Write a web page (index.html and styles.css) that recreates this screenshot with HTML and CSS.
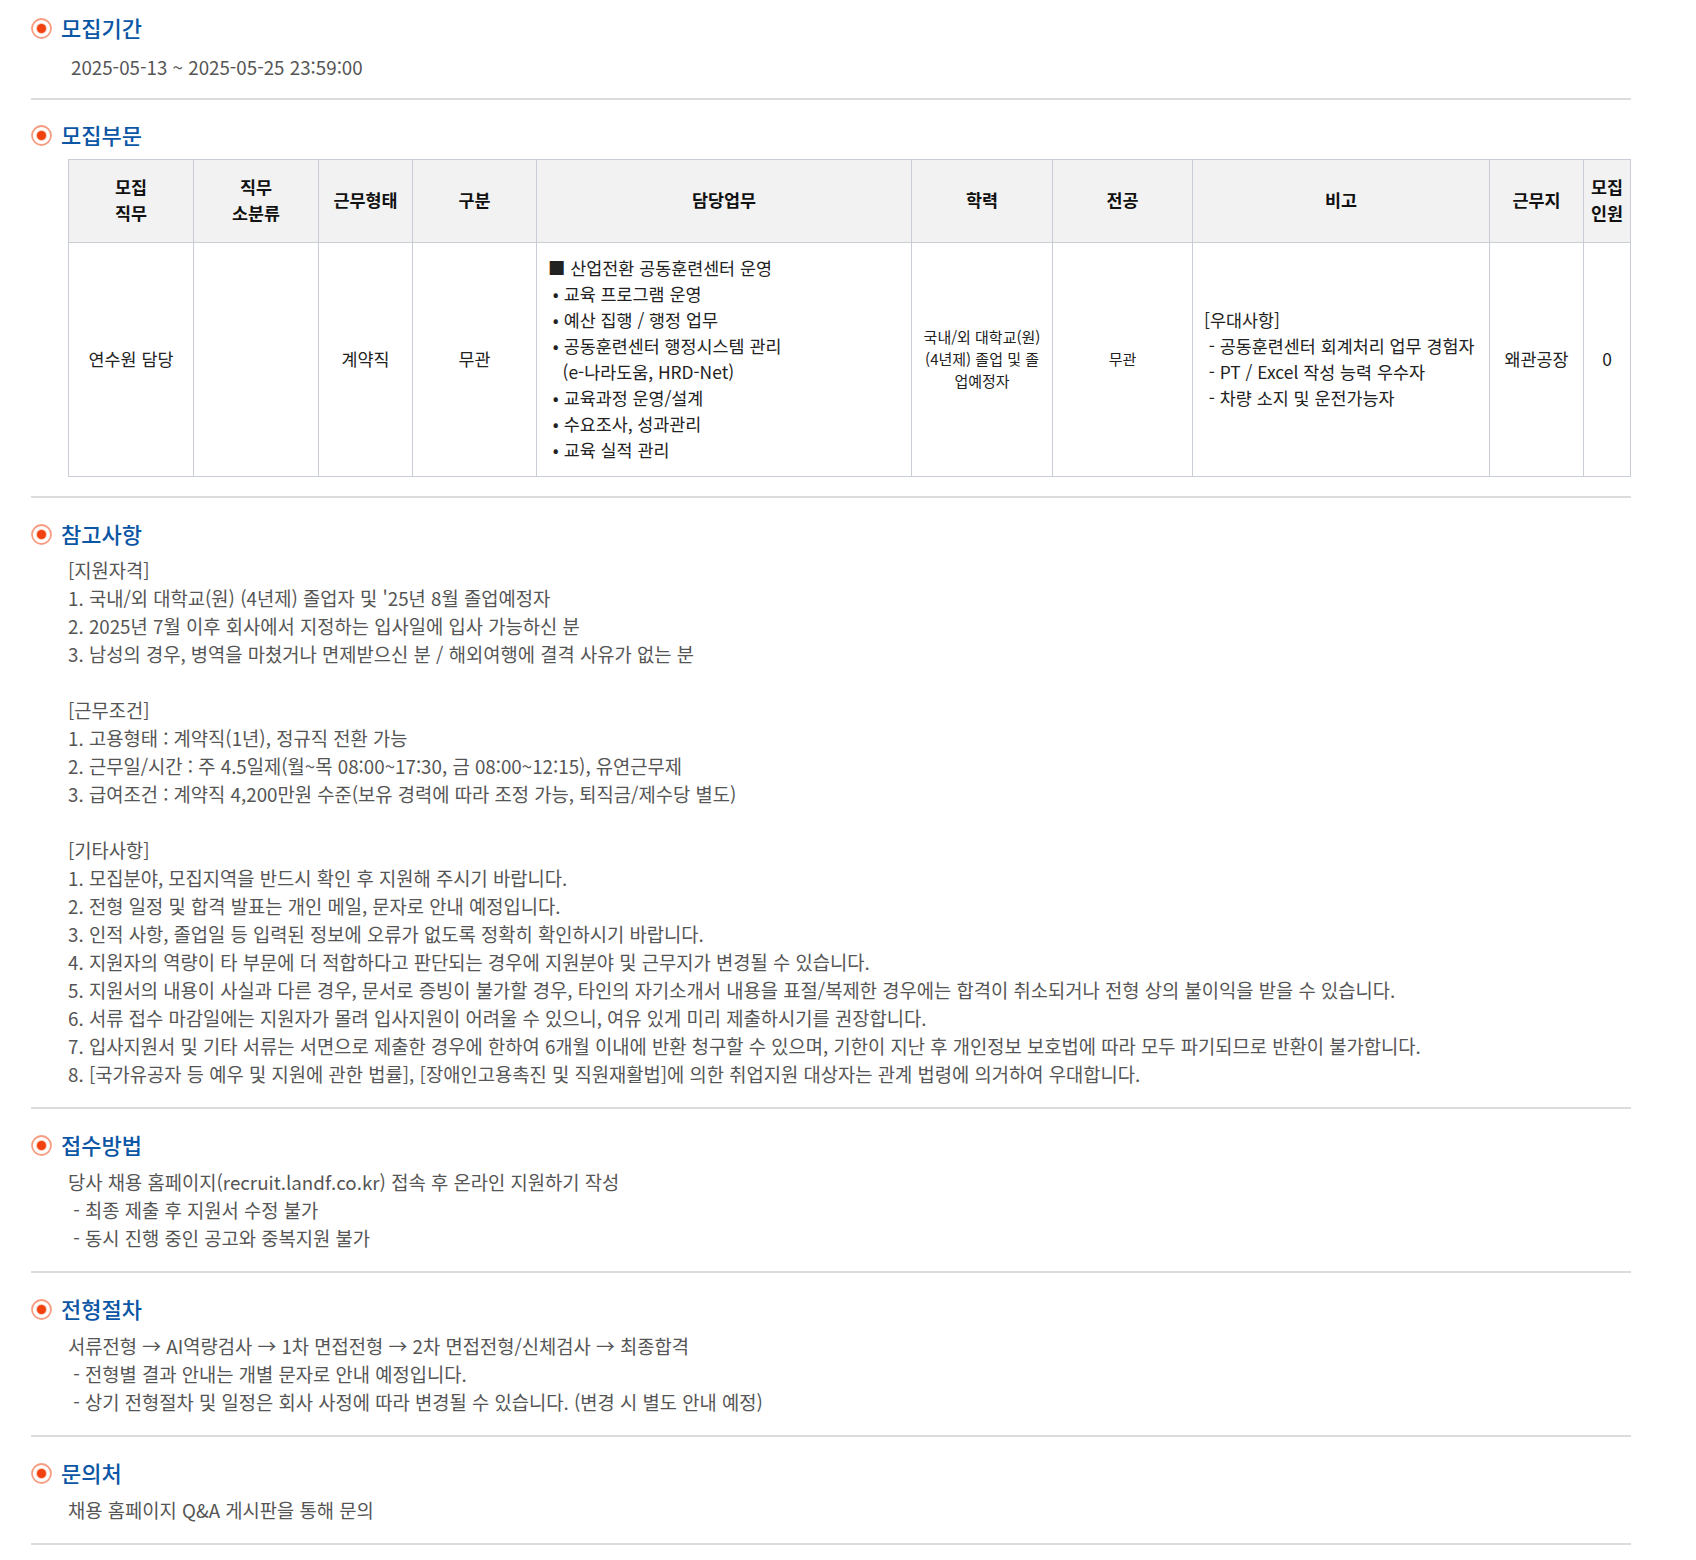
FILE: index.html
```html
<!DOCTYPE html>
<html lang="ko">
<head>
<meta charset="utf-8">
<title>채용 공고</title>
<link rel="stylesheet" href="styles.css">
</head>
<body>
<main class="page">
  <section class="sec sec-period">
    <h2 class="head"><svg class="dot" viewBox="0 0 21 21"><circle cx="10.5" cy="10.5" r="9.5" fill="#fff" stroke="#f79c80" stroke-width="1.8"/><circle cx="10.5" cy="10.5" r="5.4" fill="#fbc4b0"/><circle cx="10.5" cy="10.5" r="4.5" fill="#f0410f"/></svg>모집기간</h2>
    <p class="period">2025-05-13 ~ 2025-05-25 23:59:00</p>
  </section>
  <section class="sec sec-table">
    <h2 class="head"><svg class="dot" viewBox="0 0 21 21"><circle cx="10.5" cy="10.5" r="9.5" fill="#fff" stroke="#f79c80" stroke-width="1.8"/><circle cx="10.5" cy="10.5" r="5.4" fill="#fbc4b0"/><circle cx="10.5" cy="10.5" r="4.5" fill="#f0410f"/></svg>모집부문</h2>
    <table class="jobs">
      <colgroup>
        <col class="c1"><col class="c2"><col class="c3"><col class="c4"><col class="c5"><col class="c6"><col class="c7"><col class="c8"><col class="c9"><col class="c10">
      </colgroup>
      <thead>
        <tr><th>모집<br>직무</th><th>직무<br>소분류</th><th>근무형태</th><th>구분</th><th>담당업무</th><th>학력</th><th>전공</th><th>비고</th><th>근무지</th><th>모집<br>인원</th></tr>
      </thead>
      <tbody>
        <tr>
          <td>연수원 담당</td>
          <td></td>
          <td>계약직</td>
          <td>무관</td>
          <td class="left">■ 산업전환 공동훈련센터 운영<br>&nbsp;• 교육 프로그램 운영<br>&nbsp;• 예산 집행 / 행정 업무<br>&nbsp;• 공동훈련센터 행정시스템 관리<br>&nbsp; &nbsp;(e-나라도움, HRD-Net)<br>&nbsp;• 교육과정 운영/설계<br>&nbsp;• 수요조사, 성과관리<br>&nbsp;• 교육 실적 관리</td>
          <td class="small">국내/외 대학교(원)<br>(4년제) 졸업 및 졸<br>업예정자</td>
          <td class="small">무관</td>
          <td class="left">[우대사항]<br>&nbsp;- 공동훈련센터 회계처리 업무 경험자<br>&nbsp;- PT / Excel 작성 능력 우수자<br>&nbsp;- 차량 소지 및 운전가능자</td>
          <td>왜관공장</td>
          <td>0</td>
        </tr>
      </tbody>
    </table>
  </section>
  <section class="sec sec-notes">
    <h2 class="head"><svg class="dot" viewBox="0 0 21 21"><circle cx="10.5" cy="10.5" r="9.5" fill="#fff" stroke="#f79c80" stroke-width="1.8"/><circle cx="10.5" cy="10.5" r="5.4" fill="#fbc4b0"/><circle cx="10.5" cy="10.5" r="4.5" fill="#f0410f"/></svg>참고사항</h2>
    <p class="body">[지원자격]<br>1. 국내/외 대학교(원) (4년제) 졸업자 및 '25년 8월 졸업예정자<br>2. 2025년 7월 이후 회사에서 지정하는 입사일에 입사 가능하신 분<br>3. 남성의 경우, 병역을 마쳤거나 면제받으신 분 / 해외여행에 결격 사유가 없는 분<br><br>[근무조건]<br>1. 고용형태 : 계약직(1년), 정규직 전환 가능<br>2. 근무일/시간 : 주 4.5일제(월~목 08:00~17:30, 금 08:00~12:15), 유연근무제<br>3. 급여조건 : 계약직 4,200만원 수준(보유 경력에 따라 조정 가능, 퇴직금/제수당 별도)<br><br>[기타사항]<br>1. 모집분야, 모집지역을 반드시 확인 후 지원해 주시기 바랍니다.<br>2. 전형 일정 및 합격 발표는 개인 메일, 문자로 안내 예정입니다.<br>3. 인적 사항, 졸업일 등 입력된 정보에 오류가 없도록 정확히 확인하시기 바랍니다.<br>4. 지원자의 역량이 타 부문에 더 적합하다고 판단되는 경우에 지원분야 및 근무지가 변경될 수 있습니다.<br>5. 지원서의 내용이 사실과 다른 경우, 문서로 증빙이 불가할 경우, 타인의 자기소개서 내용을 표절/복제한 경우에는 합격이 취소되거나 전형 상의 불이익을 받을 수 있습니다.<br>6. 서류 접수 마감일에는 지원자가 몰려 입사지원이 어려울 수 있으니, 여유 있게 미리 제출하시기를 권장합니다.<br>7. 입사지원서 및 기타 서류는 서면으로 제출한 경우에 한하여 6개월 이내에 반환 청구할 수 있으며, 기한이 지난 후 개인정보 보호법에 따라 모두 파기되므로 반환이 불가합니다.<br>8. [국가유공자 등 예우 및 지원에 관한 법률], [장애인고용촉진 및 직원재활법]에 의한 취업지원 대상자는 관계 법령에 의거하여 우대합니다.</p>
  </section>
  <section class="sec">
    <h2 class="head"><svg class="dot" viewBox="0 0 21 21"><circle cx="10.5" cy="10.5" r="9.5" fill="#fff" stroke="#f79c80" stroke-width="1.8"/><circle cx="10.5" cy="10.5" r="5.4" fill="#fbc4b0"/><circle cx="10.5" cy="10.5" r="4.5" fill="#f0410f"/></svg>접수방법</h2>
    <p class="body">당사 채용 홈페이지(recruit.landf.co.kr) 접속 후 온라인 지원하기 작성<br>&nbsp;- 최종 제출 후 지원서 수정 불가<br>&nbsp;- 동시 진행 중인 공고와 중복지원 불가</p>
  </section>
  <section class="sec">
    <h2 class="head"><svg class="dot" viewBox="0 0 21 21"><circle cx="10.5" cy="10.5" r="9.5" fill="#fff" stroke="#f79c80" stroke-width="1.8"/><circle cx="10.5" cy="10.5" r="5.4" fill="#fbc4b0"/><circle cx="10.5" cy="10.5" r="4.5" fill="#f0410f"/></svg>전형절차</h2>
    <p class="body">서류전형 → AI역량검사 → 1차 면접전형 → 2차 면접전형/신체검사 → 최종합격<br>&nbsp;- 전형별 결과 안내는 개별 문자로 안내 예정입니다.<br>&nbsp;- 상기 전형절차 및 일정은 회사 사정에 따라 변경될 수 있습니다. (변경 시 별도 안내 예정)</p>
  </section>
  <section class="sec">
    <h2 class="head"><svg class="dot" viewBox="0 0 21 21"><circle cx="10.5" cy="10.5" r="9.5" fill="#fff" stroke="#f79c80" stroke-width="1.8"/><circle cx="10.5" cy="10.5" r="5.4" fill="#fbc4b0"/><circle cx="10.5" cy="10.5" r="4.5" fill="#f0410f"/></svg>문의처</h2>
    <p class="body">채용 홈페이지 Q&amp;A 게시판을 통해 문의</p>
  </section>
</main>
</body>
</html>
```

FILE: styles.css
```css
* { box-sizing: border-box; }
html, body { margin: 0; padding: 0; background: #fff; }
body { font-family: "Noto Sans CJK KR", "Noto Sans", sans-serif; color: #555; }
.page { width: 1631px; padding: 14px 0 0 31px; }
.sec { border-bottom: 2px solid #dcdcdc; padding-bottom: 19px; margin-bottom: 22px; }
.sec-period { padding-bottom: 17px; margin-bottom: 21px; }
.head { display: flex; align-items: flex-start; gap: 9px; margin: 0; height: 28px; font-size: 22px; font-weight: 500; line-height: 27px; color: #0b56a5; }
.dot { width: 21px; height: 21px; flex: none; margin-top: 4px; }
.period { margin: 11px 0 0 40px; font-size: 18.75px; line-height: 28px; }
.body { margin: 9px 0 0 37px; font-size: 18.75px; line-height: 28px; }
.sec-notes .body { margin-top: 8px; }
.jobs { margin: 10px 0 0 37px; width: 1562px; table-layout: fixed; border-collapse: collapse; font-size: 17.4px; line-height: 26px; color: #222; }
.jobs th, .jobs td { border: 1px solid #c9ced6; padding: 0 0 2px; text-align: center; vertical-align: middle; }
.jobs th { height: 83px; background: #f2f2f2; font-weight: 700; color: #111; }
.jobs td { height: 234px; }
.jobs td.left { text-align: left; padding: 0 11px 2px; }
.jobs td.small { font-size: 15px; line-height: 22px; padding: 0 9px 2px; }
.c1, .c2 { width: 125px; }
.c3 { width: 94px; }
.c4 { width: 124px; }
.c5 { width: 375px; }
.c6 { width: 141px; }
.c7 { width: 140px; }
.c8 { width: 297px; }
.c9 { width: 94px; }
.c10 { width: 47px; }
```
